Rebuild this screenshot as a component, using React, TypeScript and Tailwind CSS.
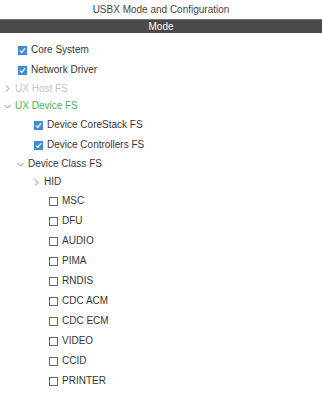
import { ReactNode } from "react";

type Row =
  | { kind: "check"; label: string; checked: boolean; indent: number }
  | { kind: "node"; label: string; open: boolean; indent: number; tone?: "muted" | "green" };

const rows: Row[] = [
  { kind: "check", label: "Core System", checked: true, indent: 18 },
  { kind: "check", label: "Network Driver", checked: true, indent: 18 },
  { kind: "node", label: "UX Host FS", open: false, indent: 4, tone: "muted" },
  { kind: "node", label: "UX Device FS", open: true, indent: 4, tone: "green" },
  { kind: "check", label: "Device CoreStack FS", checked: true, indent: 34 },
  { kind: "check", label: "Device Controllers FS", checked: true, indent: 34 },
  { kind: "node", label: "Device Class FS", open: true, indent: 17 },
  { kind: "node", label: "HID", open: false, indent: 33 },
  ...["MSC", "DFU", "AUDIO", "PIMA", "RNDIS", "CDC ACM", "CDC ECM", "VIDEO", "CCID", "PRINTER"].map(
    (label): Row => ({ kind: "check", label, checked: false, indent: 49 })
  ),
];

const Box = ({ checked }: { checked: boolean }) =>
  checked ? (
    <span className="w-[9px] h-[9px] bg-[#3b8fd9] flex items-center justify-center shrink-0">
      <svg width="7" height="7" viewBox="0 0 7 7">
        <polyline points="1,3.6 2.8,5.4 6,1.4" fill="none" stroke="#fff" strokeWidth="1.3" />
      </svg>
    </span>
  ) : (
    <span className="w-[9px] h-[9px] border border-[#6b6b6b] bg-white shrink-0" />
  );

const Chevron = ({ open }: { open: boolean }) => (
  <svg width="7" height="7" viewBox="0 0 7 7" className="shrink-0">
    {open ? (
      <polyline points="0.5,2 3.5,5 6.5,2" fill="none" stroke="#8a8a8a" strokeWidth="1" />
    ) : (
      <polyline points="2,0.5 5,3.5 2,6.5" fill="none" stroke="#8a8a8a" strokeWidth="1" />
    )}
  </svg>
);

const RowItem = ({ row }: { row: Row }) => {
  let content: ReactNode;
  if (row.kind === "check") {
    content = (
      <div className="h-[20px] flex items-center gap-[4px]" style={{ paddingLeft: row.indent }}>
        <Box checked={row.checked} />
        <span className="text-[#363636]">{row.label}</span>
      </div>
    );
  } else {
    const color =
      row.tone === "muted" ? "text-[#c4c4c4]" : row.tone === "green" ? "text-[#4cb35c]" : "text-[#363636]";
    content = (
      <div
        className={`flex items-center gap-[4px] ${row.tone === "muted" ? "h-[17px]" : "h-[18px]"}`}
        style={{ paddingLeft: row.indent }}
      >
        <Chevron open={row.open} />
        <span className={color}>{row.label}</span>
      </div>
    );
  }
  return content;
};

export default function App() {
  return (
    <div className="w-[322px] h-[400px] bg-white overflow-hidden text-[10px] leading-none font-['Liberation_Sans',Arial,sans-serif]">
      {/* HEADER */}
      <div className="h-[19px] flex items-center justify-center text-[#444]">
        USBX Mode and Configuration
      </div>
      <div className="h-[14px] bg-[#4a4a4a] border-t border-[#777] text-white flex items-center justify-center">
        Mode
      </div>

      {/* TREE */}
      <div className="pt-[7px]">
        {rows.map((row, i) => (
          <RowItem key={i} row={row} />
        ))}
      </div>
    </div>
  );
}
